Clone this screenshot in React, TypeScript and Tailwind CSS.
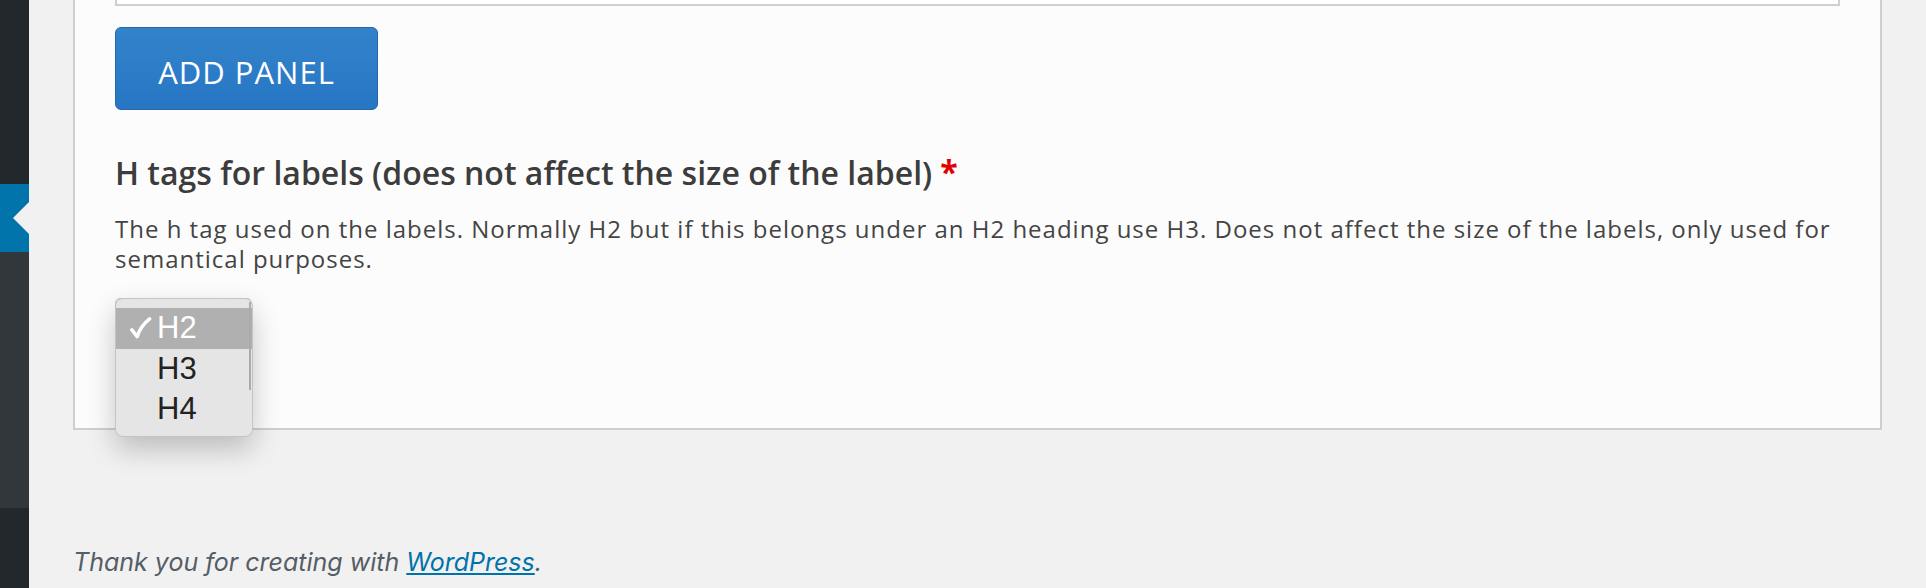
export default function App() {
  return (
    <div className="flex h-[588px] w-[1926px] overflow-hidden bg-[#f1f1f1]">
      {/* admin sidebar */}
      <div className="flex w-[29px] shrink-0 flex-col">
        <div className="h-[184px] bg-[#23282d]" />
        <div className="flex h-[68px] items-center justify-end bg-[#0073aa]">
          <div className="h-0 w-0 border-y-[16px] border-r-[16px] border-y-transparent border-r-[#f1f1f1]" />
        </div>
        <div className="h-[256px] bg-[#32373c]" />
        <div className="flex-1 bg-[#23282d]" />
      </div>

      {/* main content */}
      <div className="flex flex-1 flex-col px-[44px]">
        <div className="border-x-2 border-b-2 border-[#cfcfcf] bg-[#fcfcfc] px-[40px] pb-[90px]">
          <div className="h-[6px] border-x-2 border-b-2 border-[#cfcfcf] bg-white" />

          <button
            type="button"
            className="mt-[21px] flex h-[83px] w-[263px] items-center justify-center rounded-[6px] border border-[#2468ad] bg-gradient-to-b from-[#3383cb] to-[#2776c4] pt-[7px] text-[31px] tracking-[1px] text-white"
            style={{ fontFamily: '"Open Sans", sans-serif' }}
          >
            ADD PANEL
          </button>

          <h3
            className="mt-[43px] flex items-start text-[32px] font-semibold leading-[40px] text-[#3c3c3c]"
            style={{ fontFamily: '"Open Sans", sans-serif' }}
          >
            H tags for labels (does not affect the size of the label)
            <span className="ml-[8px] mt-[4px] text-[32px] font-bold leading-[30px] text-[#e00000]">*</span>
          </h3>

          <p
            className="mt-[21px] text-[24px] leading-[30px] tracking-[1px] text-[#444]"
            style={{ fontFamily: '"Open Sans", sans-serif' }}
          >
            The h tag used on the labels. Normally H2 but if this belongs under an H2 heading use H3. Does not affect the size of the labels, only used for semantical purposes.
          </p>

          {/* select with its open native popup */}
          <div className="relative mt-[24px] h-[40px] w-[137px] rounded-[5px] border border-[#c8c8c8] bg-[#f4f4f4]">
            <div
              className="absolute -left-[1px] -top-[1px] z-10 flex h-[139px] w-[138px] flex-col rounded-[8px] border border-[#c4c4c4] bg-[#e5e5e5] py-[9px] shadow-[0_12px_28px_rgba(0,0,0,0.22)]"
              style={{ fontFamily: '"Liberation Sans", Arial, sans-serif' }}
            >
              <div className="absolute right-[1px] top-[3px] h-[88px] w-[2px] bg-[#ababab]" />
              <div className="flex h-[41px] items-center bg-[#b0b0b0] text-[31px] text-white">
                <svg className="ml-[13px] mr-[5px] h-[23px] w-[23px]" viewBox="0 0 24 24" fill="none">
                  <path d="M3 13.5 L8.5 20.5 C11 13 15 7 21.5 2" stroke="white" strokeWidth="3.6" strokeLinecap="round" strokeLinejoin="round" />
                </svg>
                <span>H2</span>
              </div>
              <div className="flex h-[40px] items-center pl-[41px] text-[31px] text-[#222]">H3</div>
              <div className="flex h-[40px] items-center pl-[41px] text-[31px] text-[#222]">H4</div>
            </div>
          </div>
        </div>

        <p
          className="mt-[116px] text-[25px] italic leading-[32px] text-[#555d66]"
          style={{ fontFamily: 'Inter, Roboto, sans-serif' }}
        >
          Thank you for creating with{" "}
          <a href="#" className="text-[#0073aa] underline">WordPress</a>.
        </p>
      </div>
    </div>
  );
}
